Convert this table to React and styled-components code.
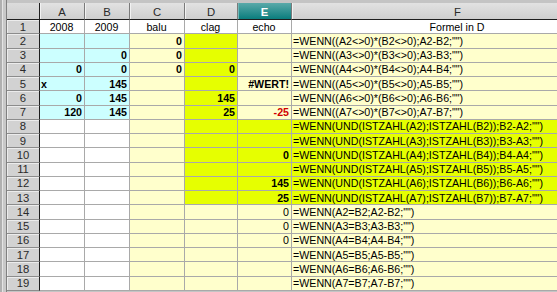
import React from 'react'
import styled, { createGlobalStyle } from 'styled-components'

const GlobalStyle = createGlobalStyle`
  html, body {
    margin: 0;
    background: #c4c4c4;
    overflow: hidden;
  }
`

const CYAN = '#ccffff'
const PALE = '#ffffcc'
const LIME = '#e6ff00'
const WHITE = '#ffffff'

const Frame = styled.div`
  width: 557px;
  height: 292px;
  box-sizing: border-box;
  padding: 3px 0 0 7px;
  background: #c4c4c4;
  box-shadow: inset 2px 0 0 #b0b0b0, inset 3px 0 0 #e4e4e4, inset 6px 0 0 #c8c8c8, inset 7px 0 0 #808080;
  overflow: hidden;
`

const Sheet = styled.div`
  display: grid;
  grid-template-columns: 33px 45px 45px 55px 53px 54px 332px;
  grid-template-rows: 17px repeat(19, 14.25px);
  font-family: "Liberation Sans", Arial, sans-serif;
`

const Corner = styled.div`
  box-sizing: border-box;
  background: linear-gradient(#dcdcdc, #cdcdcd);
  border-right: 1px solid #1e1e1e;
  border-bottom: 1px solid #1e1e1e;
`

const ColHead = styled.div`
  box-sizing: border-box;
  display: flex;
  align-items: center;
  justify-content: center;
  font-size: 11.3px;
  padding-top: 1px;
  color: ${p => (p.$selected ? '#ffffff' : '#2a2a2a')};
  font-weight: ${p => (p.$selected ? 700 : 400)};
  background: ${p =>
    p.$selected
      ? 'linear-gradient(#5aa9a9, #0a7d7d)'
      : 'linear-gradient(#e2e2e2, #cecece)'};
  border-right: 1px solid #7a7a7a;
  border-bottom: 1px solid #1e1e1e;
  box-shadow: inset 1px 0 0 ${p => (p.$selected ? '#6fb5b5' : '#f2f2f2')};
`

const RowHead = styled.div`
  box-sizing: border-box;
  display: flex;
  align-items: center;
  justify-content: center;
  font-size: 11.3px;
  color: #2a2a2a;
  background: #d2d2d2;
  border-right: 1px solid #1e1e1e;
  border-bottom: 1px solid #8c8c8c;
  box-shadow: inset 0 1px 0 #ececec, inset 1px 0 0 #ececec;
`

const Cell = styled.div`
  box-sizing: border-box;
  display: flex;
  align-items: center;
  justify-content: ${p =>
    p.$align === 'left' ? 'flex-start' : p.$align === 'center' ? 'center' : 'flex-end'};
  padding: 0 2px 0 1px;
  font-size: 10.67px;
  font-weight: ${p => (p.$bold ? 700 : 400)};
  color: ${p => (p.$red ? '#d00000' : '#000000')};
  background: ${p => p.$bg};
  border-right: 1px solid #a9a9a9;
  border-bottom: 1px solid #a9a9a9;
  white-space: nowrap;
  overflow: hidden;
`

const cols = ['A', 'B', 'C', 'D', 'E', 'F']

const formula = r => {
  if (r <= 7) return `=WENN((A${r}<>0)*(B${r}<>0);A${r}-B${r};"")`
  if (r <= 13) {
    const n = r - 6
    return `=WENN(UND(ISTZAHL(A${n});ISTZAHL(B${n}));B${n}-A${n};"")`
  }
  const n = r - 12
  return `=WENN(A${n}=B${n};A${n}-B${n};"")`
}

const values = {
  2: { C: '0' },
  3: { B: '0', C: '0' },
  4: { A: '0', B: '0', C: '0', D: '0' },
  5: { A: 'x', B: '145', E: '#WERT!' },
  6: { A: '0', B: '145', D: '145' },
  7: { A: '120', B: '145', D: '25', E: '-25' },
  10: { E: '0' },
  12: { E: '145' },
  13: { E: '25' },
  14: { E: '0' },
  15: { E: '0' },
  16: { E: '0' },
}

const fill = (r, c) => {
  if (r === 1) return WHITE
  if (c === 'A' || c === 'B') return r <= 7 ? CYAN : WHITE
  if (c === 'C') return PALE
  if (c === 'D') return r <= 13 ? LIME : PALE
  return r >= 8 && r <= 13 ? LIME : PALE
}

const header = ['2008', '2009', 'balu', 'clag', 'echo', 'Formel in D']

const App = () => {
  const rows = Array.from({ length: 19 }, (_, i) => i + 1)
  return (
    <Frame>
      <GlobalStyle />
      <Sheet>
        <Corner />
        {cols.map(c => (
          <ColHead key={c} $selected={c === 'E'}>{c}</ColHead>
        ))}
        {rows.map(r => (
          <React.Fragment key={r}>
            <RowHead>{r}</RowHead>
            {cols.map((c, i) => {
              if (r === 1) {
                return <Cell key={c} $bg={WHITE} $align="center">{header[i]}</Cell>
              }
              if (c === 'F') {
                return <Cell key={c} $bg={fill(r, c)} $align="left">{formula(r)}</Cell>
              }
              const v = (values[r] || {})[c] || ''
              return (
                <Cell
                  key={c}
                  $bg={fill(r, c)}
                  $align={v === 'x' ? 'left' : 'right'}
                  $bold={r < 14}
                  $red={v === '-25'}
                >
                  {v}
                </Cell>
              )
            })}
          </React.Fragment>
        ))}
      </Sheet>
    </Frame>
  )
}

export default App
